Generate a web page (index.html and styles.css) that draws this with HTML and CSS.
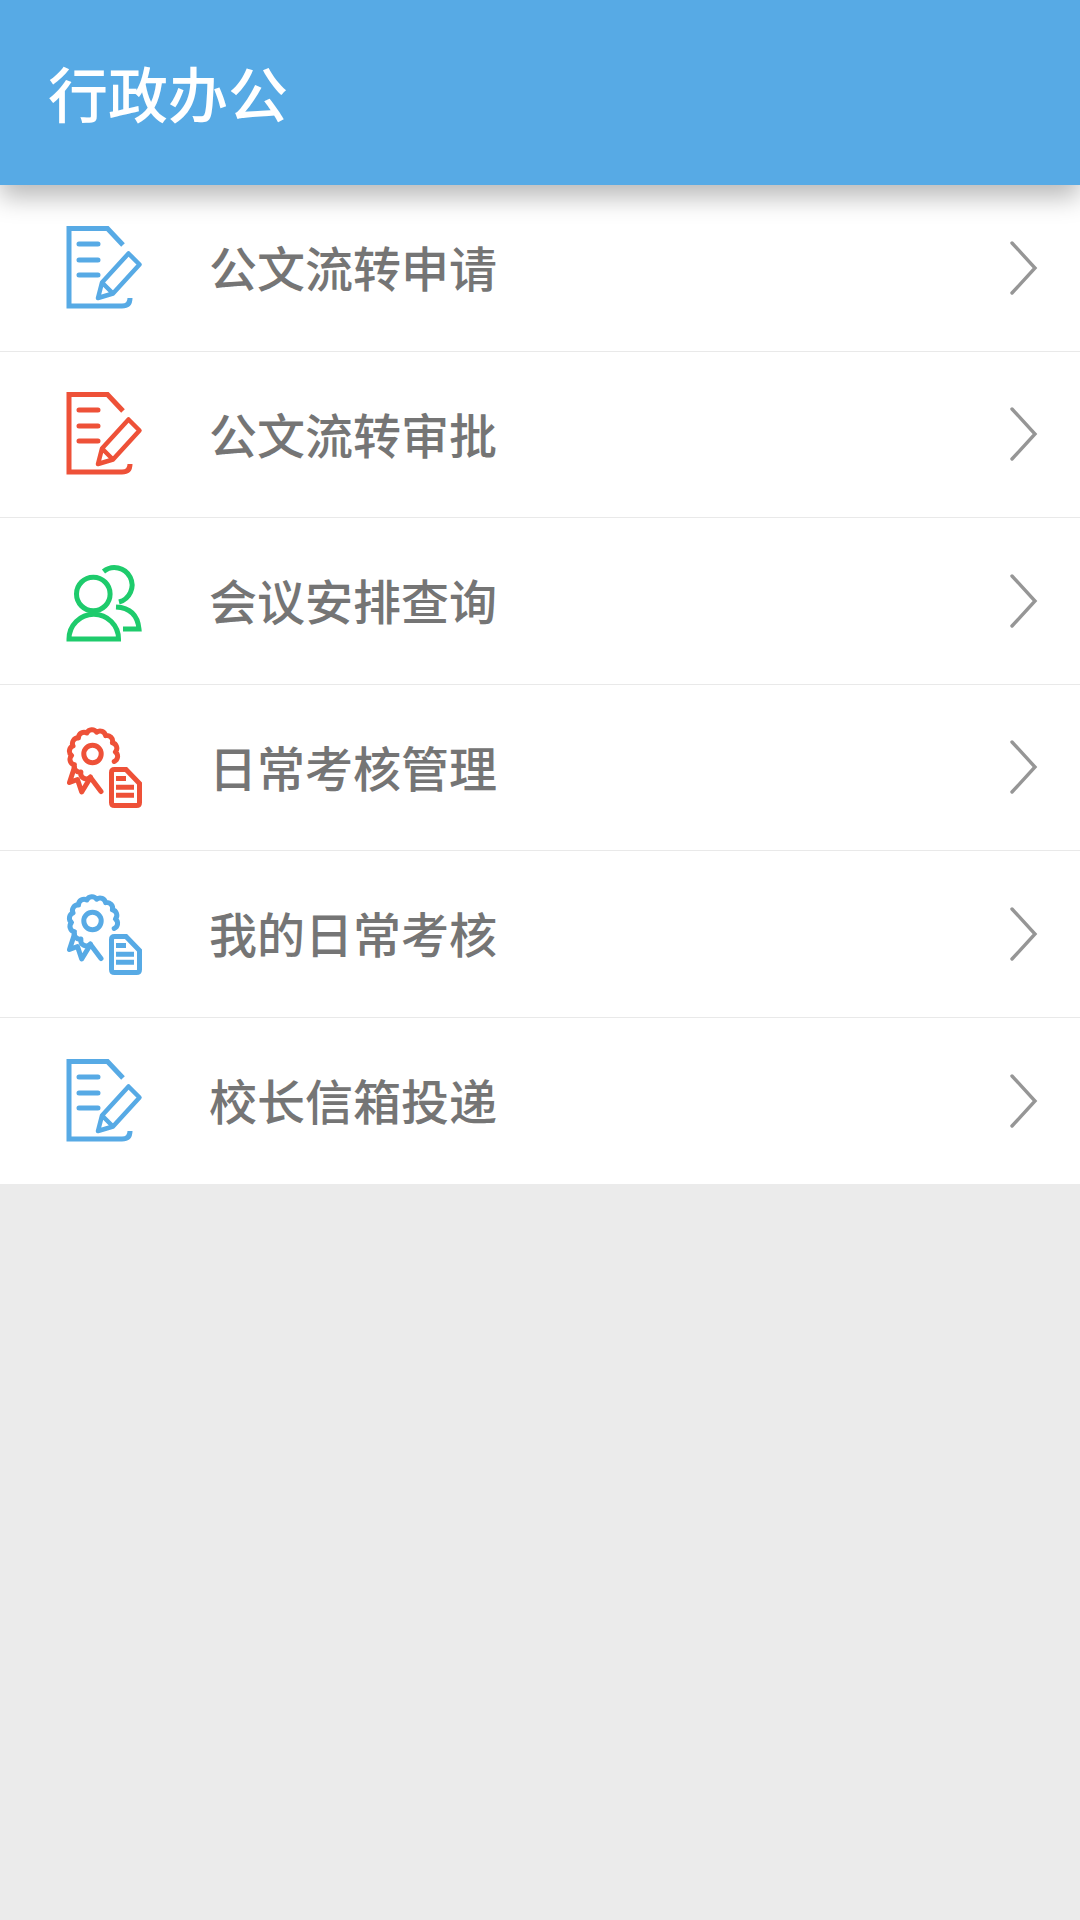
FILE: index.html
```html
<!DOCTYPE html>
<html lang="zh-CN">
<head>
<meta charset="utf-8">
<title>行政办公</title>
<link rel="stylesheet" href="styles.css">
</head>
<body>
<svg class="defs" width="0" height="0" aria-hidden="true">
  <symbol id="i-doc" viewBox="0 3 130 110">
    <path class="line" d="M83 35 L67.5 18.5 H29 V96 H82 Q90 96 90 88"/>
    <path class="line round" d="M39 34 H58 M39 50 H58 M39 65 H58"/>
    <path class="line thin" d="M58 88 L62 72.5 L88.5 43.5 L99.5 54.5 L73 83.5 Z M62 72.5 L73 83.5"/>
  </symbol>
  <symbol id="i-people" viewBox="0 -4 130 110">
    <circle class="line" cx="53.3" cy="44" r="16.8"/>
    <path class="line" d="M29 89 H78.5 A24.75 24.75 0 0 0 29 89 Z"/>
    <path class="line" d="M63.5 21.5 A17.5 17.5 0 1 1 79 52"/>
    <path class="line" d="M76 57 Q97 58 99 79 H83"/>
  </symbol>
  <symbol id="i-badge" viewBox="0 -2.5 130 110">
    <circle class="line" cx="52.5" cy="39.5" r="8.7"/>
    <path class="line round" d="M74.2 47 A5.6 5.6 0 0 0 75.4 37.4 A5.6 5.6 0 0 0 72.4 28.2 A5.6 5.6 0 0 0 65.6 21.2 A5.6 5.6 0 0 0 56.6 17.7 A5.6 5.6 0 0 0 46.9 18.5 A5.6 5.6 0 0 0 38.5 23.4 A5.6 5.6 0 0 0 33 31.4 A5.6 5.6 0 0 0 31.5 41 A5.6 5.6 0 0 0 34.4 50.3 A5.6 5.6 0 0 0 40.9 57.5 A5.6 5.6 0 0 0 50.5 62.5"/>
    <path class="line round" d="M34.4 53 L29.5 68 L37.5 65 L41.7 77.5 L50.5 63 L61 77"/>
    <path class="line" d="M74.5 55 H86 L99.5 69 V88 Q99.5 91 96.5 91 H74.5 Q71.5 91 71.5 88 V58 Q71.5 55 74.5 55 Z"/>
    <path class="line" d="M76 64 H86 M76 72.7 H94 M76 80.7 H94"/>
  </symbol>
  <symbol id="i-chevron" viewBox="0 0 30 56">
    <path class="chev" d="M3 3 L26 28 L3 53"/>
  </symbol>
</svg>

<header class="appbar">
  <h1 class="appbar-title">行政办公</h1>
</header>

<ul class="menu">
  <li class="menu-row">
    <svg class="menu-icon blue"><use href="#i-doc"/></svg>
    <span class="menu-label">公文流转申请</span>
    <svg class="menu-chevron"><use href="#i-chevron"/></svg>
  </li>
  <li class="menu-row">
    <svg class="menu-icon red"><use href="#i-doc"/></svg>
    <span class="menu-label">公文流转审批</span>
    <svg class="menu-chevron"><use href="#i-chevron"/></svg>
  </li>
  <li class="menu-row">
    <svg class="menu-icon green"><use href="#i-people"/></svg>
    <span class="menu-label">会议安排查询</span>
    <svg class="menu-chevron"><use href="#i-chevron"/></svg>
  </li>
  <li class="menu-row">
    <svg class="menu-icon red"><use href="#i-badge"/></svg>
    <span class="menu-label">日常考核管理</span>
    <svg class="menu-chevron"><use href="#i-chevron"/></svg>
  </li>
  <li class="menu-row">
    <svg class="menu-icon blue"><use href="#i-badge"/></svg>
    <span class="menu-label">我的日常考核</span>
    <svg class="menu-chevron"><use href="#i-chevron"/></svg>
  </li>
  <li class="menu-row">
    <svg class="menu-icon blue"><use href="#i-doc"/></svg>
    <span class="menu-label">校长信箱投递</span>
    <svg class="menu-chevron"><use href="#i-chevron"/></svg>
  </li>
</ul>
</body>
</html>
```
FILE: styles.css
```css
* {
  box-sizing: border-box;
}

html,
body {
  margin: 0;
  padding: 0;
  height: 100%;
}

body {
  background: #ebebeb;
  font-family: "Noto Sans CJK SC", "Noto Sans", sans-serif;
  overflow: hidden;
}

.defs {
  display: block;
  height: 0;
}

.appbar {
  position: relative;
  z-index: 1;
  display: flex;
  align-items: center;
  height: 185px;
  padding: 0 0 1px 48px;
  background: #57aae5;
  box-shadow: 0 12px 24px rgba(0, 0, 0, 0.28);
}

.appbar-title {
  margin: 0;
  font-size: 60px;
  font-weight: 500;
  line-height: 1;
  color: #fff;
}

.menu {
  margin: 0;
  padding: 0;
  list-style: none;
  background: #fff;
}

.menu-row {
  display: flex;
  align-items: center;
  height: 166.5px;
  padding: 0 41px 0 40px;
  border-bottom: 1.5px solid #e9e9e9;
}

.menu-row:last-child {
  border-bottom: 0;
}

.menu-icon {
  flex: none;
  width: 130px;
  height: 110px;
}

.menu-label {
  margin: 0 0 3px 39px;
  font-size: 48px;
  font-weight: 500;
  line-height: 1;
  color: #757575;
}

.menu-chevron {
  flex: none;
  width: 30px;
  height: 56px;
  margin-left: auto;
}

.line {
  fill: none;
  stroke: currentColor;
  stroke-width: 5;
}

.line.thin {
  stroke-width: 4.5;
  stroke-linejoin: round;
}

.line.round {
  stroke-linecap: round;
  stroke-linejoin: round;
}

.chev {
  fill: none;
  stroke: #969696;
  stroke-width: 3.4;
  stroke-linecap: round;
}

.blue {
  color: #57aae5;
}

.red {
  color: #ee5138;
}

.green {
  color: #1ecb6c;
}
```
